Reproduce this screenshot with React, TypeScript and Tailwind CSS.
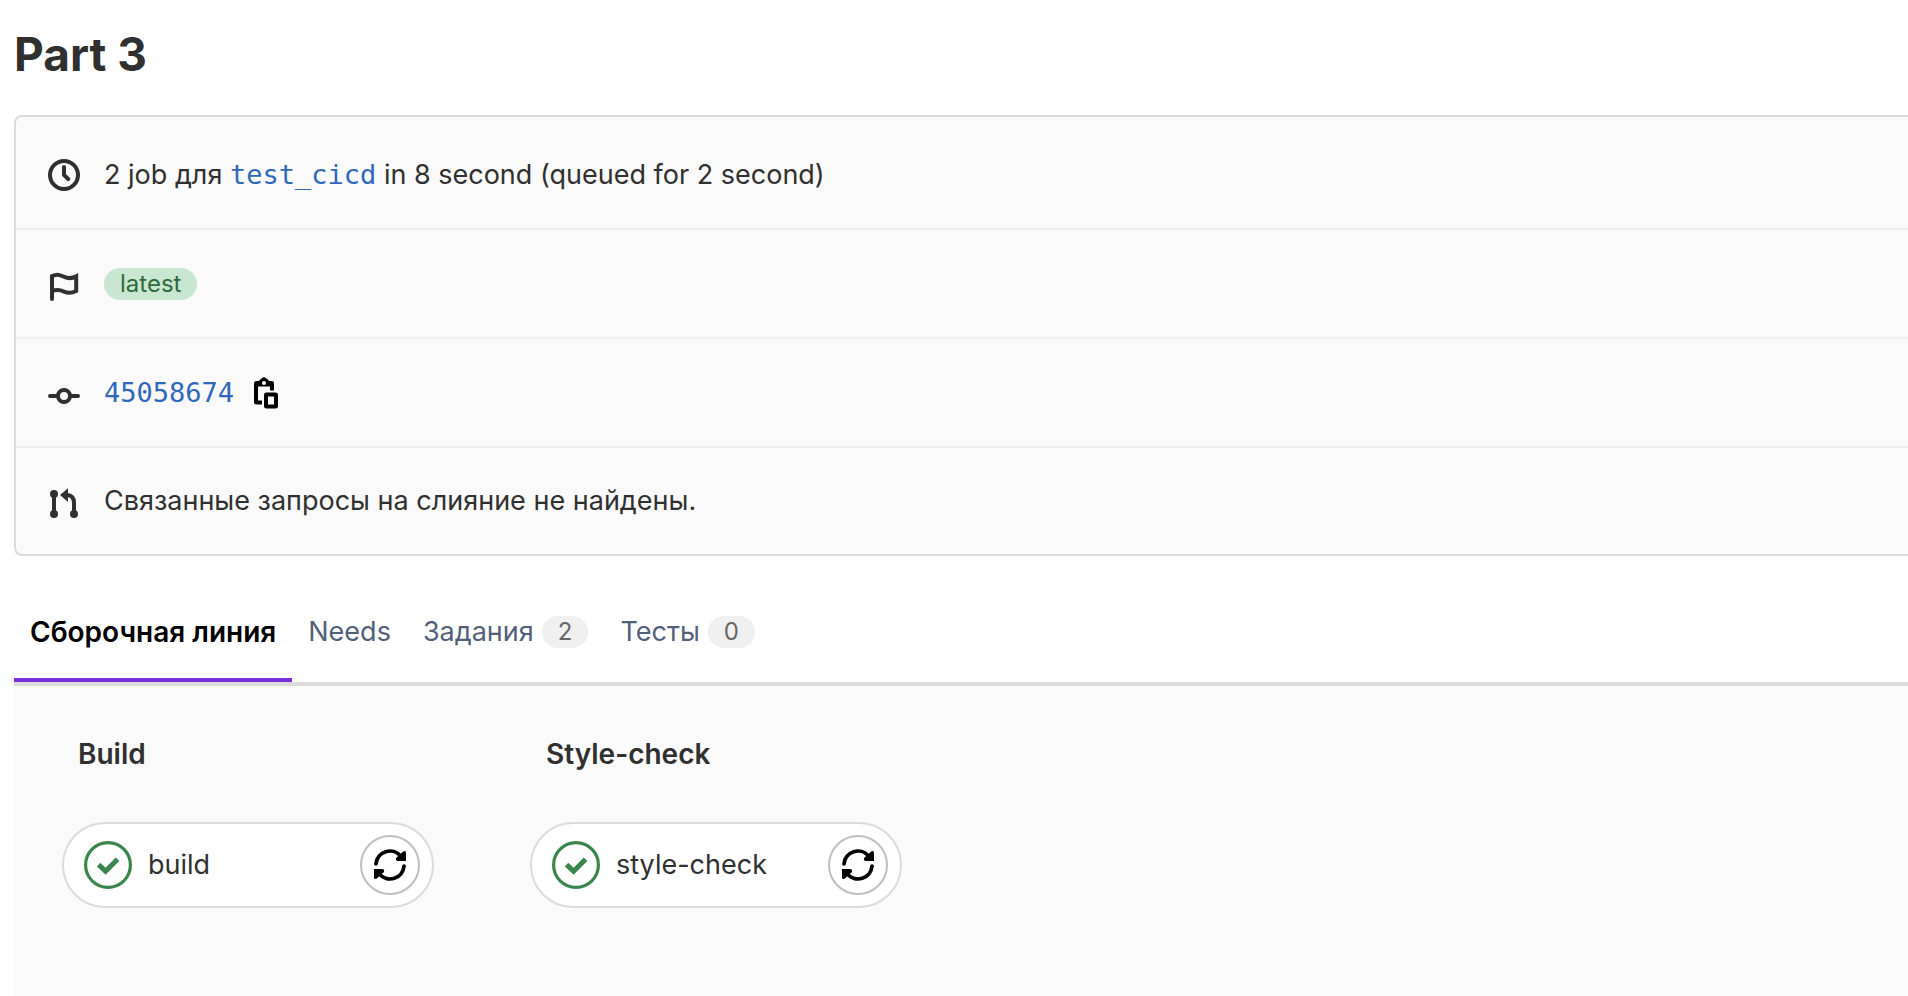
import type { ReactNode } from "react";

function Icon({ children, className = "" }: { children: ReactNode; className?: string }) {
  return (
    <svg viewBox="0 0 16 16" aria-hidden="true" fill="none" stroke="currentColor" strokeWidth="2" strokeLinecap="round" className={`size-8 shrink-0 ${className}`}>
      {children}
    </svg>
  );
}

const ClockIcon = () => (
  <Icon>
    <circle cx="8" cy="8" r="7" />
    <path d="M8 4v4l2.1 2" strokeLinejoin="round" />
  </Icon>
);

const FlagIcon = () => (
  <Icon className="mt-1.5">
    <path d="M2 14V2.600C4.800 1.400 6.200 2 8 2.900c1.900.9 3.400 1.200 6.100-.2v7.300c-2.700 1.400-4.300 1.100-6.100.3-1.800-.8-3.300-1.300-6-.2" />
  </Icon>
);

const CommitIcon = () => (
  <Icon className="mt-1.5">
    <circle cx="8" cy="8" r="3" />
    <path d="M1 8h3.500M11.500 8H15" />
  </Icon>
);

const MergeIcon = () => (
  <Icon className="mt-1.5">
    <path d="M3 3v10M9.500 3.500C12 3.600 13 5.300 13 7.500V13" />
    <g fill="currentColor" stroke="none">
      <circle cx="3" cy="3" r="2" />
      <circle cx="3" cy="13" r="2" />
      <circle cx="13" cy="13" r="2" />
      <path d="M6 3.500L10 .1V7z" />
    </g>
  </Icon>
);

const CopyIcon = () => (
  <svg viewBox="0 0 12 16" aria-hidden="true" fill="currentColor" fillRule="evenodd" className="h-8 w-6">
    <path d="M1.200 2h1.200L3.600.9Q5-.6 6.400.9L7.600 2h1.200Q10 2 10 3.200v3.600H8v-2H2v7h2v2H1.200Q0 13.800 0 12.600V3.200Q0 2 1.200 2zM5 2a1 1 0 1 0 0 2 1 1 0 0 0 0-2z" />
    <path d="M6.200 7.800h4.600q1.200 0 1.200 1.200v5.600q0 1.200-1.200 1.200H6.200Q5 15.800 5 14.600V9q0-1.200 1.200-1.200zM7 9.800v4h3v-4z" />
  </svg>
);

const RetryIcon = () => (
  <Icon>
    <path d="M1 7.400A7 7 0 0 1 13.300 3.500M15 8.600A7 7 0 0 1 2.700 12.500" strokeWidth="1.900" />
    <g fill="currentColor" stroke="none">
      <path d="M14.600 1.200Q16 .7 16 1.800V6h-4.200q-1.400-.5-.6-1.600z" />
      <path d="M1.400 14.800Q0 15.300 0 14.200V10h4.200q1.400.5.6 1.600z" />
    </g>
  </Icon>
);

const PassedIcon = () => (
  <svg viewBox="0 0 48 48" role="img" aria-label="passed" fill="none" stroke="currentColor" className="size-12 shrink-0 text-[#3a854b]">
    <circle cx="24" cy="24" r="22.400" strokeWidth="3.200" />
    <path d="M16.400 25.400l5.200 4.800L31.800 20" strokeWidth="5" strokeLinecap="square" />
  </svg>
);

function InfoRow({ icon, children }: { icon: ReactNode; children: ReactNode }) {
  return (
    <div className="flex h-[109px] items-center gap-6 border-b-2 border-[#f0f0f0] px-8 first:h-[113px] first:pt-1 last:h-[106px] last:border-b-0">
      {icon}
      <div className="flex items-center">{children}</div>
    </div>
  );
}

function Tab({ label, count, active = false }: { label: string; count?: number; active?: boolean }) {
  return (
    <button
      type="button"
      role="tab"
      aria-selected={active}
      className={`flex h-24 items-center gap-2 border-b-4 px-4 ${active ? "border-[#7b2fd6] text-[28px] font-semibold text-black" : "border-transparent text-[#525f7a]"}`}
    >
      {label}
      {count !== undefined && (
        <span className="flex h-8 items-center rounded-full bg-[#f0f0f0] px-4 text-[24px] text-[#666]">{count}</span>
      )}
    </button>
  );
}

function Stage({ title, job }: { title: string; job: string }) {
  return (
    <section className="w-[372px]">
      <h2 className="px-4 text-[28px] leading-10 font-semibold">{title}</h2>
      <div className="mt-12 flex h-[86px] items-center rounded-full border-2 border-[#dbdbdb] bg-white pr-3 pl-5">
        <PassedIcon />
        <span className="ml-4 grow">{job}</span>
        <button type="button" aria-label={`Retry ${job}`} className="flex size-[60px] items-center justify-center rounded-full border-2 border-[#bfbfbf] bg-white text-black">
          <RetryIcon />
        </button>
      </div>
    </section>
  );
}

export default function App() {
  return (
    <main className="flex min-h-screen flex-col bg-white pl-[14px] font-['Inter','Liberation_Sans',sans-serif] text-[27px] leading-10 text-[#303030]">
      <h1 className="pt-6 pb-[31px] text-[46px] leading-[60px] font-bold">Part 3</h1>

      <div className="rounded-l-lg border-2 border-r-0 border-[#dbdbdb] bg-[#fafafa]">
        <InfoRow icon={<ClockIcon />}>
          <p>
            2 job для{" "}
            <a href="#branch" className="font-['DejaVu_Sans_Mono',monospace] text-[#2f68b9]">test_cicd</a>{" "}
            in 8 second (queued for 2 second)
          </p>
        </InfoRow>
        <InfoRow icon={<FlagIcon />}>
          <span className="flex h-8 items-center rounded-full bg-[#c8e6d0] px-4 text-[24px] text-[#2f6b3c]">latest</span>
        </InfoRow>
        <InfoRow icon={<CommitIcon />}>
          <a href="#commit" className="font-['DejaVu_Sans_Mono',monospace] text-[#2f68b9]">45058674</a>
          <button type="button" aria-label="Copy commit SHA" className="ml-5 text-black">
            <CopyIcon />
          </button>
        </InfoRow>
        <InfoRow icon={<MergeIcon />}>
          <p>Связанные запросы на слияние не найдены.</p>
        </InfoRow>
      </div>

      <div role="tablist" className="mt-[30px] flex border-b-4 border-[#dbdbdb]">
        <Tab label="Сборочная линия" active />
        <Tab label="Needs" />
        <Tab label="Задания" count={2} />
        <Tab label="Тесты" count={0} />
      </div>

      <div role="tabpanel" className="flex grow gap-24 bg-[#fafafa] px-12 pt-12">
        <Stage title="Build" job="build" />
        <Stage title="Style-check" job="style-check" />
      </div>
    </main>
  );
}
